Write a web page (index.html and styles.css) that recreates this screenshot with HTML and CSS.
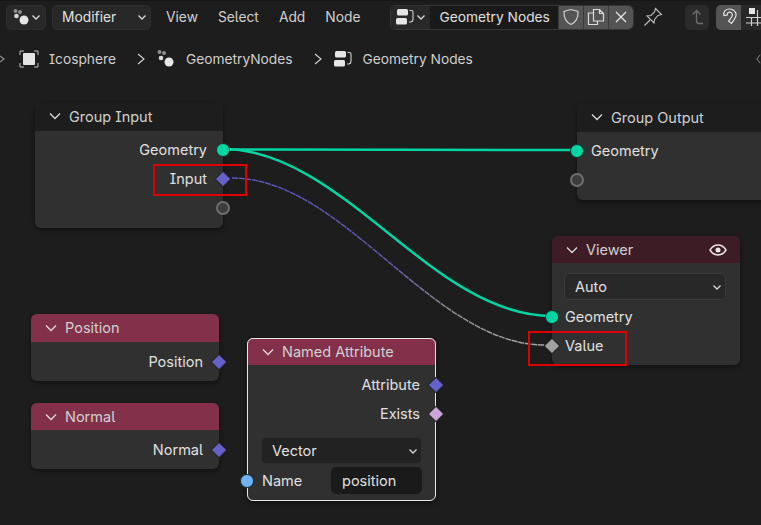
FILE: index.html
```html
<!DOCTYPE html>
<html lang="en">
<head>
<meta charset="utf-8">
<title>Geometry Nodes</title>
<link rel="stylesheet" href="styles.css">
</head>
<body>
<div class="app">
  <header class="topbar">
    <div class="btn editor-btn">
      <svg class="i18" viewBox="0 0 18 18"><circle cx="3.5" cy="3" r="2" fill="#8e8e8e"/><circle cx="8" cy="4" r="2" fill="#8e8e8e"/><circle cx="4.5" cy="8" r="2.3" fill="#d8d8d8"/><circle cx="12" cy="12" r="4.5" fill="#e6e6e6"/></svg>
      <svg class="chev" viewBox="0 0 10 10"><path d="M1.5 3.5 5 7l3.5-3.5"/></svg>
    </div>
    <div class="btn mode-btn"><span>Modifier</span><svg class="chev" viewBox="0 0 10 10"><path d="M1.5 3.5 5 7l3.5-3.5"/></svg></div>
    <nav class="menu"><span>View</span><span>Select</span><span>Add</span><span>Node</span></nav>
    <div class="datablock">
      <div class="db-type">
        <svg class="i20" viewBox="0 0 20 20"><rect x="2" y="2" width="11" height="6.5" rx="1.5" fill="#e6e6e6"/><rect x="1" y="11" width="11" height="6.5" rx="1.5" fill="#e6e6e6"/><path d="M14.5 3.5h2c1 0 1.500.7 1.500 1.500v7c0 2-1 3-2.500 3H14" fill="none" stroke="#d0d0d0" stroke-width="1.100"/></svg>
        <svg class="chev" viewBox="0 0 10 10"><path d="M1.500 3.500 5 7l3.500-3.500"/></svg>
      </div>
      <div class="db-name">Geometry Nodes</div>
      <div class="db-act">
        <svg class="i18" viewBox="0 0 18 18"><path d="M9 1.500 16 3.500c.3 6.500-1.500 10.500-7 13-5.500-2.500-7.300-6.500-7-13z" fill="none" stroke="#cfcfcf" stroke-width="1.200"/></svg>
      </div>
      <div class="db-act">
        <svg class="i18" viewBox="0 0 18 18"><path d="M6.500 5H1.500v11.500h9V13M6.500 1.500h6l4 4V13h-10zM12.500 1.500v4h4" fill="none" stroke="#dcdcdc" stroke-width="1.200"/></svg>
      </div>
      <div class="db-act last">
        <svg class="i18" viewBox="0 0 18 18"><path d="M4 4l10 10M14 4 4 14" fill="none" stroke="#e6e6e6" stroke-width="1.300"/></svg>
      </div>
    </div>
    <svg class="pin" viewBox="0 0 20 20"><path d="M12.500 1.500 18.500 7.500 15 8.500 11.500 12.500 11 16 4 9 8 8.500 11.500 5zM7 13l-5.500 5.500" fill="none" stroke="#bdbdbd" stroke-width="1.100"/></svg>
    <div class="tool-btn dim">
      <svg class="i18" viewBox="0 0 18 18"><path d="M4.500 6.500 8.500 2.500l4 4M8.500 2.500V13c0 1.500 1 2.500 2.500 2.500h4" fill="none" stroke="#6e6e6e" stroke-width="1.300"/></svg>
    </div>
    <div class="snap">
      <div class="snap-on">
        <svg class="i20" viewBox="0 0 20 20"><path d="M5 8.500C4 4 7 2 10.500 2c4 0 7 3 6.500 6.500-.4 2.500-2 4.500-4.500 8l-3-2.500c2-2.500 3.800-4 4-6 .1-1.800-1.500-3-3.200-2.800C8.800 5.400 8 6.500 8.300 8z" fill="none" stroke="#e6e6e6" stroke-width="1.200"/></svg>
      </div>
      <div class="snap-grid">
        <svg class="i18" viewBox="0 0 18 18"><rect x="3" y="0" width="6" height="6" fill="#e6e6e6"/><path d="M0 9.500h18M11.500 2v16M5.500 9v9M0 15h18" stroke="#d0d0d0" stroke-width="1.200" fill="none"/></svg>
      </div>
    </div>
  </header>

  <div class="crumbs">
    <svg class="i20" viewBox="0 0 20 20"><path d="M1 6V2h4M15 2h4v4M19 14v4h-4M5 18H1v-4" fill="none" stroke="#bdbdbd" stroke-width="1"/><rect x="4" y="4" width="12" height="12" rx="1" fill="#e4e4e4"/></svg>
    <span class="crumb">Icosphere</span>
    <svg class="sep" viewBox="0 0 10 14"><path d="M2 2l6 5-6 5"/></svg>
    <svg class="i20" viewBox="0 0 20 20"><circle cx="3.500" cy="3" r="2" fill="#8e8e8e"/><circle cx="8" cy="4" r="2" fill="#8e8e8e"/><circle cx="5" cy="9" r="2.300" fill="#d8d8d8"/><circle cx="13" cy="13" r="4.500" fill="#e6e6e6"/></svg>
    <span class="crumb">GeometryNodes</span>
    <svg class="sep" viewBox="0 0 10 14"><path d="M2 2l6 5-6 5"/></svg>
    <svg class="i20" viewBox="0 0 20 20"><rect x="2" y="2" width="11" height="6.500" rx="1.500" fill="#e6e6e6"/><rect x="1" y="11" width="11" height="6.500" rx="1.500" fill="#e6e6e6"/><path d="M14.500 3.500h2c1 0 1.500.7 1.500 1.500v7c0 2-1 3-2.500 3H14" fill="none" stroke="#d0d0d0" stroke-width="1.100"/></svg>
    <span class="crumb">Geometry Nodes</span>
  </div>

  <svg class="edge-arrow left" viewBox="0 0 6 8"><path d="M0 1l4 3-4 3"/></svg>
  <svg class="edge-arrow right" viewBox="0 0 6 12"><path d="M5 1 1 6l4 5"/></svg>

  <svg class="wires" viewBox="0 0 761 525">
    <defs>
      <linearGradient id="fade" gradientUnits="userSpaceOnUse" x1="232" y1="178" x2="545" y2="345">
        <stop offset="0" stop-color="#5a55b8"/>
        <stop offset="0.5" stop-color="#5d58ae"/>
        <stop offset="0.72" stop-color="#8e8e8e"/>
        <stop offset="1" stop-color="#a8a8a8"/>
      </linearGradient>
    </defs>
    <path d="M223 149.500C340 149.500 460 150 577 150" fill="none" stroke="#00d6a3" stroke-width="2.500"/>
    <path d="M223 149C343 149 432 316 552 316" fill="none" stroke="#00d6a3" stroke-width="2.500"/>
    <path d="M232 178C344 178 432 345 545 345" fill="none" stroke="url(#fade)" stroke-width="1.500" stroke-dasharray="6 0.700"/>
  </svg>

  <section class="node group-input">
    <div class="head"><svg class="chev-h" viewBox="0 0 12 12"><path d="M1 3.500 6 8.500l5-5"/></svg><span>Group Input</span></div>
    <div class="body">
      <div class="row out">Geometry<i class="sock teal"></i></div>
      <div class="row out">Input<i class="sock dia blue"></i></div>
      <div class="row out"><i class="sock empty"></i></div>
    </div>
  </section>

  <section class="node group-output">
    <div class="head"><svg class="chev-h" viewBox="0 0 12 12"><path d="M1 3.500 6 8.500l5-5"/></svg><span>Group Output</span></div>
    <div class="body">
      <div class="row in">Geometry<i class="sock teal"></i></div>
      <div class="row in"><i class="sock empty"></i></div>
    </div>
  </section>

  <section class="node viewer">
    <div class="head maroon"><svg class="chev-h" viewBox="0 0 12 12"><path d="M1 3.500 6 8.500l5-5"/></svg><span>Viewer</span>
      <svg class="eye" viewBox="0 0 18 12"><path d="M1 6c2-3.200 4.800-5 8-5s6 1.800 8 5c-2 3.200-4.800 5-8 5s-6-1.800-8-5z" fill="none" stroke="#e6e6e6" stroke-width="1.500"/><circle cx="9" cy="6" r="2.500" fill="#e6e6e6"/></svg>
    </div>
    <div class="body">
      <div class="select"><span>Auto</span><svg class="chev" viewBox="0 0 10 10"><path d="M1.500 3.500 5 7l3.500-3.500"/></svg></div>
      <div class="row in">Geometry<i class="sock teal"></i></div>
      <div class="row in">Value<i class="sock dia grey"></i></div>
    </div>
  </section>

  <section class="node position">
    <div class="head rose"><svg class="chev-h" viewBox="0 0 12 12"><path d="M1 3.500 6 8.500l5-5"/></svg><span>Position</span></div>
    <div class="body"><div class="row out">Position<i class="sock dia blue"></i></div></div>
  </section>

  <section class="node normal">
    <div class="head rose"><svg class="chev-h" viewBox="0 0 12 12"><path d="M1 3.500 6 8.500l5-5"/></svg><span>Normal</span></div>
    <div class="body"><div class="row out">Normal<i class="sock dia blue"></i></div></div>
  </section>

  <section class="node named selected">
    <div class="head rose"><svg class="chev-h" viewBox="0 0 12 12"><path d="M1 3.500 6 8.500l5-5"/></svg><span>Named Attribute</span></div>
    <div class="body">
      <div class="row out">Attribute<i class="sock dia blue"></i></div>
      <div class="row out">Exists<i class="sock dia pink"></i></div>
      <div class="select named-select"><span>Vector</span><svg class="chev" viewBox="0 0 10 10"><path d="M1.500 3.500 5 7l3.500-3.500"/></svg></div>
      <div class="row in name-row">Name<div class="field">position</div><i class="sock sky"></i></div>
    </div>
  </section>

  <div class="mark mark-input"></div>
  <div class="mark mark-value"></div>
</div>
</body>
</html>
```
FILE: styles.css
```css
* { box-sizing: border-box; }
html, body { margin: 0; padding: 0; }
body {
  width: 761px;
  height: 525px;
  overflow: hidden;
  background: #1d1d1d;
  font-family: Inter, "Liberation Sans", sans-serif;
  font-size: 14.5px;
  font-feature-settings: "cv08" 1, "ss02" 1;
  color: #e0e0e0;
}
.app { position: relative; width: 761px; height: 525px; overflow: hidden; }

.topbar {
  display: flex;
  align-items: center;
  height: 32px;
  padding: 1px 0 0 6px;
  background: #1d1d1d;
  border-top: 1px solid #161616;
  font-size: 13.800px;
}
.topbar > * { flex: none; }
.i18 { width: 18px; height: 18px; flex: none; }
.i20 { width: 20px; height: 20px; flex: none; }
.chev { width: 10px; height: 10px; flex: none; }
.chev path { fill: none; stroke: #d8d8d8; stroke-width: 1.300; }

.btn {
  display: flex;
  align-items: center;
  height: 25px;
  border: 1px solid #2e2e2e;
  border-radius: 5px;
  background: #282828;
}
.editor-btn { width: 40px; padding: 0 0 0 5px; gap: 1px; }
.mode-btn { width: 99px; margin-left: 6px; padding: 0 3px 0 9px; justify-content: space-between; }
.menu { display: flex; gap: 20px; margin-left: 15px; color: #d0d0d0; }

.datablock {
  display: flex;
  align-items: stretch;
  height: 25px;
  margin-left: 30px;
  border-radius: 5px;
  border: 1px solid #353535;
  width: 244px;
}
.db-type {
  display: flex;
  align-items: center;
  gap: 1px;
  width: 39px;
  padding-left: 4px;
  background: #282828;
  border-radius: 5px 0 0 5px;
}
.db-name {
  width: 128px;
  padding-left: 9px;
  line-height: 23px;
  font-size: 13.750px;
  background: #1a1a1a;
  color: #e0e0e0;
}
.db-act {
  display: flex;
  align-items: center;
  justify-content: center;
  width: 25px;
  background: #545454;
  border-left: 1px solid #3a3a3a;
}
.db-act.last { border-radius: 0 5px 5px 0; }
.pin { width: 20px; height: 20px; margin-left: 9px; }
.tool-btn {
  display: flex;
  align-items: center;
  justify-content: center;
  width: 24px;
  height: 25px;
  margin-left: 22px;
  border-radius: 5px;
  background: #2b2b2b;
}
.snap { display: flex; margin-left: 7px; height: 25px; }
.snap-on {
  display: flex;
  align-items: center;
  justify-content: center;
  width: 25px;
  background: #545454;
  border-radius: 5px 0 0 5px;
}
.snap-grid {
  display: flex;
  align-items: center;
  padding-left: 5px;
  width: 25px;
  background: #282828;
}

.crumbs {
  display: flex;
  align-items: center;
  height: 22px;
  margin-top: 16px;
  padding-left: 19px;
  font-size: 13.750px;
  color: #cfcfcf;
}
.crumb { margin-left: 10px; }
.sep { width: 10px; height: 14px; margin: 0 10px 0 20px; flex: none; }
.sep path { fill: none; stroke: #cfcfcf; stroke-width: 1.200; }

.edge-arrow { position: absolute; fill: none; stroke: #8a8a8a; stroke-width: 1.200; }
.edge-arrow.left { left: 0; top: 55px; width: 6px; height: 8px; }
.edge-arrow.right { left: 756px; top: 53px; width: 5px; height: 12px; }

.wires { position: absolute; left: 0; top: 0; width: 761px; height: 525px; }

.node {
  position: absolute;
  width: 188px;
  border-radius: 6px;
  background: #303030;
  box-shadow: 0 2px 5px rgba(0, 0, 0, 0.45);
}
.group-input { left: 35px; top: 103px; height: 125px; }
.group-output { left: 577px; top: 104px; width: 200px; height: 96px; }
.viewer { left: 552px; top: 236px; height: 129px; }
.position { left: 31px; top: 314px; height: 67px; }
.normal { left: 31px; top: 403px; height: 66px; }
.named { left: 247px; top: 338px; width: 189px; height: 163px; }
.selected { outline: 1.500px solid #e8e8e8; outline-offset: -1px; }

.head {
  display: flex;
  align-items: center;
  height: 28px;
  padding: 0 0 2px 14px;
  background: #1d1d1d;
  border-radius: 6px 6px 0 0;
  color: #d0d0d0;
}
.head.maroon { height: 27px; padding-bottom: 0; background: #3e1c26; }
.head.rose { height: 27px; padding-bottom: 0; background: #83314a; }
.position .head.rose { height: 28px; padding-bottom: 1px; }
.named .head.rose { padding-left: 15px; }
.chev-h { width: 12px; height: 12px; margin-right: 8px; flex: none; }
.chev-h path { fill: none; stroke: #dcdcdc; stroke-width: 1.300; }
.eye { width: 18px; height: 12px; margin-left: auto; margin-right: 13px; }

.body { padding-top: 4px; }
.position .body, .normal .body, .named .body, .viewer .body { padding-top: 5px; }
.row { position: relative; display: flex; align-items: center; height: 29px; color: #e0e0e0; }
.row.out { justify-content: flex-end; padding-right: 16px; }
.row.in { padding-left: 14px; }
.viewer .row.in { padding-left: 13px; }

.sock {
  position: absolute;
  top: 50%;
  width: 14px;
  height: 14px;
  margin-top: -7px;
  border-radius: 50%;
}
.row.out .sock { right: -7px; }
.row.in .sock { left: -7px; }
.sock.teal { background: #00d6a3; border: 1px solid #14342c; }
.sock.empty { background: #3c3c3c; border: 2px solid #6e6e6e; }
.sock.sky { background: #6fb3f5; border: 1px solid #1c2a38; }
.sock.dia { width: 12px; height: 12px; margin-top: -6px; border-radius: 1px; transform: rotate(45deg); border: 1px solid #232323; }
.row.out .sock.dia { right: -6px; }
.row.in .sock.dia { left: -6px; }
.sock.blue { background: #6461c8; }
.sock.grey { background: #a1a1a1; }
.sock.pink { background: #cda4d8; }

.select {
  display: flex;
  align-items: center;
  justify-content: space-between;
  height: 27px;
  margin: 5px 14px 2px 12px;
  padding: 0 3px 0 10px;
  background: #282828;
  border: 1px solid #3a3a3a;
  border-radius: 5px;
}
.named-select { margin: 9px 14px 0 14px; background: #222; border-color: #2e2e2e; }
.row.name-row { height: 27px; margin-top: 3px; padding-left: 15px; }
.field {
  margin-left: auto;
  margin-right: 14px;
  width: 91px;
  height: 27px;
  padding-left: 11px;
  line-height: 27px;
  background: #1a1a1a;
  border-radius: 5px;
}
.name-row .sock { left: -6px; }

.mark { position: absolute; border: 2px solid #e00000; }
.mark-input { left: 153px; top: 164px; width: 94px; height: 32px; }
.mark-value { left: 528px; top: 331px; width: 99px; height: 35px; }
```
